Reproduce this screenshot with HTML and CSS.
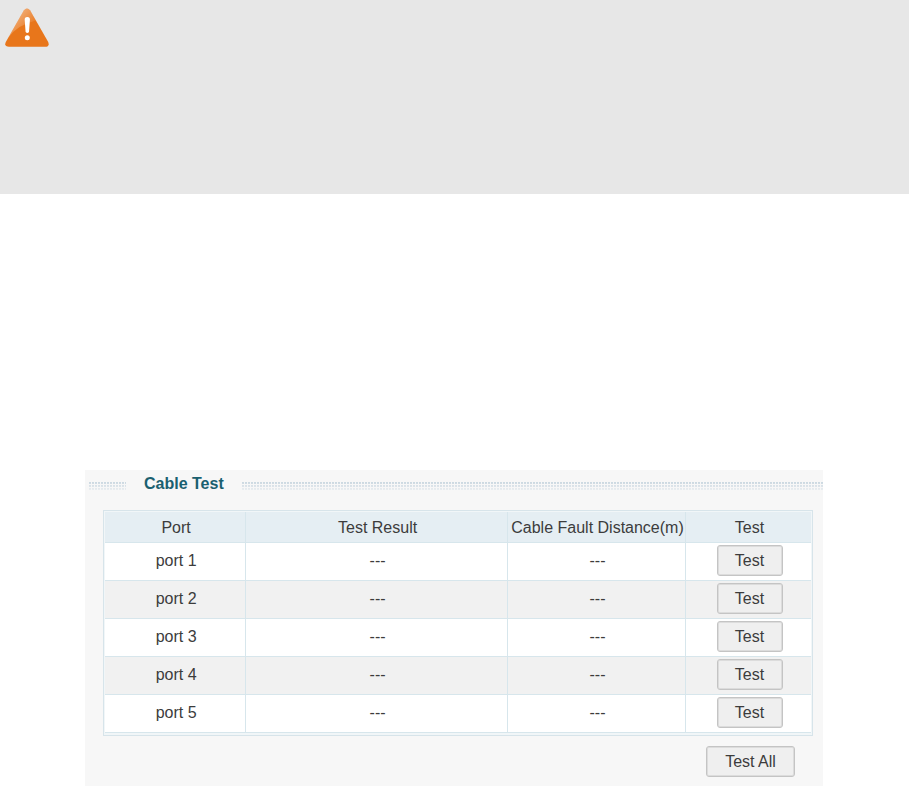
FILE: index.html
```html
<!DOCTYPE html>
<html lang="en">
<head>
    <meta charset="UTF-8">
    <meta name="viewport" content="width=device-width, initial-scale=1.0">
    <title>Cable Test</title>
    <link rel="stylesheet" href="styles.css">
</head>
<body>
    <div class="notice">
        <svg class="warning" width="44" height="40" viewBox="0 0 44 40" role="img" aria-label="Warning">
            <defs>
                <linearGradient id="shine" x1="0" y1="0" x2="1" y2="1">
                    <stop offset="0.1" stop-color="#fff" stop-opacity="0.5"/>
                    <stop offset="0.8" stop-color="#fff" stop-opacity="0"/>
                </linearGradient>
            </defs>
            <path d="M18.8 2.6Q22-1.5 25.2 2.6L43.2 34Q45 38.7 40 38.7H4Q-1.2 38.7 .8 34Z" fill="#e8761b"/>
            <path d="M18.8 2.6Q22-1.5 25.2 2.6L31 12.5Q12 17 3.5 29.5Z" fill="url(#shine)"/>
            <path d="M22.3 9Q25.2 9 24.9 12L24 24Q22.3 26 20.6 24L19.7 12Q19.4 9 22.3 9Z" fill="#fff"/>
            <circle cx="22.3" cy="29.8" r="2.5" fill="#fff"/>
        </svg>
    </div>

    <div class="panel">
        <div class="title">
            <span class="dots short"></span>
            <h2>Cable Test</h2>
            <span class="dots"></span>
        </div>

        <div class="tableBox">
            <table>
                <colgroup>
                    <col class="colPort">
                    <col class="colResult">
                    <col class="colDistance">
                    <col class="colTest">
                </colgroup>
                <thead>
                    <tr>
                        <th>Port</th>
                        <th>Test Result</th>
                        <th>Cable Fault Distance(m)</th>
                        <th>Test</th>
                    </tr>
                </thead>
                <tbody>
                    <tr><td>port 1</td><td>---</td><td>---</td><td><button type="button">Test</button></td></tr>
                    <tr><td>port 2</td><td>---</td><td>---</td><td><button type="button">Test</button></td></tr>
                    <tr><td>port 3</td><td>---</td><td>---</td><td><button type="button">Test</button></td></tr>
                    <tr><td>port 4</td><td>---</td><td>---</td><td><button type="button">Test</button></td></tr>
                    <tr><td>port 5</td><td>---</td><td>---</td><td><button type="button">Test</button></td></tr>
                </tbody>
            </table>
        </div>

        <div class="actions">
            <button type="button">Test All</button>
        </div>
    </div>
</body>
</html>
```

FILE: styles.css
```css
* {
    box-sizing: border-box;
}
body {
    margin: 0;
    background-color: #fff;
    color: #3c3c3c;
    font-family: "Liberation Sans", Arial, sans-serif;
    font-size: 16px;
    line-height: 20px;
}

/* Warning strip */
.notice {
    height: 194px;
    padding: 8px 5px;
    background-color: #e7e7e7;
}
.warning {
    display: block;
}

/* Panel */
.panel {
    margin: 276px 86px 0 85px;
    padding-bottom: 10px;
    background-color: #f7f7f7;
}
.title {
    display: flex;
    align-items: center;
    height: 28px;
    padding-left: 4px;
}
.title h2 {
    margin: 0 18px;
    color: #1a6070;
    font-size: 16px;
    line-height: 20px;
}
.dots {
    flex: 1;
    height: 8px;
    margin-top: 3px;
    background-image:
        linear-gradient(rgba(247, 247, 247, 0), rgba(247, 247, 247, 0.7)),
        radial-gradient(circle at 1px 1px, #cbd8e1 1px, transparent 1px);
    background-size: 100% 100%, 3px 3px;
}
.dots.short {
    flex: none;
    width: 37px;
}

/* Port table */
.tableBox {
    margin: 12px 10px 0 18px;
    padding: 1px 1px 2px;
    border: 1px solid #d7e4ea;
    background-color: #f1f6f8;
}
table {
    width: 100%;
    table-layout: fixed;
    border-collapse: separate;
    border-spacing: 0;
}
.colPort { width: 20%; }
.colDistance { width: 178px; }
.colTest { width: 125px; }
th,
td {
    padding: 0 0 2px 2px;
    border-right: 1px solid #d7e6ec;
    border-bottom: 1px solid #d7e6ec;
    text-align: center;
    white-space: nowrap;
}
th:last-child,
td:last-child {
    border-right: 0;
}
th {
    height: 31px;
    padding: 2px 0 0 2px;
    background-color: #e5eef3;
    font-weight: normal;
}
td {
    height: 38px;
    background-color: #fff;
}
tbody tr:nth-child(even) td {
    background-color: #f1f1f1;
}

/* Buttons */
button {
    height: 31px;
    padding: 0 16px;
    border: 1px solid #c4c4c4;
    border-radius: 3px;
    box-shadow: inset 0 0 0 1px #dcdcdc;
    background-color: #efefef;
    color: #3c3c3c;
    font: inherit;
    vertical-align: middle;
}
td button {
    min-width: 66px;
}
.actions {
    display: flex;
    justify-content: flex-end;
    padding: 10px 28px 0;
}
.actions button {
    min-width: 89px;
}
```
